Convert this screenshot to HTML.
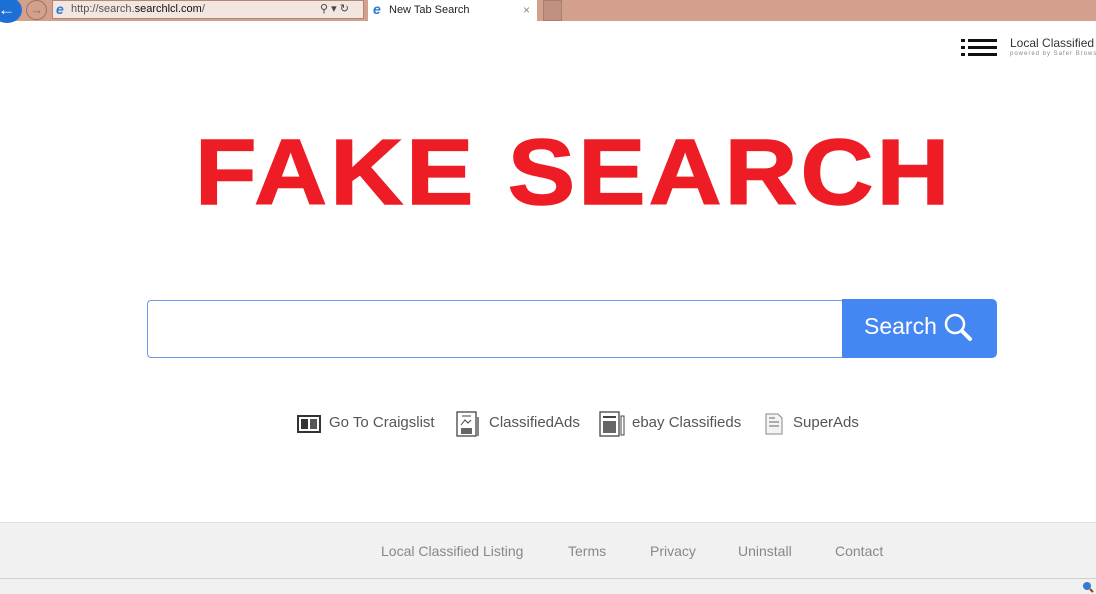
<!DOCTYPE html>
<html><head><style>
*{margin:0;padding:0;box-sizing:border-box}
body{width:1096px;height:594px;overflow:hidden;background:#fff;font-family:"Liberation Sans",Arial,sans-serif;position:relative}
.abs{position:absolute}
</style></head><body>
<div class="abs" style="left:0;top:0;width:1096px;height:21px;background:#d3a08d"></div>
<div class="abs" style="left:-8px;top:-3px;width:30px;height:26px;border-radius:50%;background:#1c6fd4"></div>
<div class="abs" style="left:-2px;top:0;color:#fff;font-size:17px;font-weight:bold">&#8592;</div>
<div class="abs" style="left:26px;top:0;width:21px;height:20px;border-radius:50%;border:1px solid #a0705f;color:#9a6a5a;font-size:13px;text-align:center;line-height:18px">&#8594;</div>
<div class="abs" style="left:52px;top:0;width:312px;height:19px;background:#f3e6e1;border:1px solid #b08878"></div>
<div class="abs" style="left:56px;top:1px;color:#2a7ad0;font-size:14px;font-style:italic;font-weight:bold">e</div>
<div class="abs" style="left:71px;top:3px;font-size:11px;color:#555">http://search.<span style="color:#111">searchlcl.com</span>/</div>
<div class="abs" style="left:320px;top:2px;font-size:11px;color:#444">&#9906; &#9662; &#8635;</div>
<div class="abs" style="left:368px;top:0;width:169px;height:21px;background:#fff"></div>
<div class="abs" style="left:373px;top:1px;color:#2a7ad0;font-size:14px;font-style:italic;font-weight:bold">e</div>
<div class="abs" style="left:389px;top:4px;font-size:11px;color:#222">New Tab Search</div>
<div class="abs" style="left:523px;top:3px;font-size:12px;color:#888">&#215;</div>
<div class="abs" style="left:543px;top:0;width:19px;height:21px;background:#c09080;border:1px solid #a87e70"></div>

<svg class="abs" style="left:961px;top:38px" width="38" height="20"><g fill="#111"><rect x="0" y="1" width="4" height="3"/><rect x="7" y="1" width="29" height="3"/><rect x="0" y="8" width="4" height="3"/><rect x="7" y="8" width="29" height="3"/><rect x="0" y="15" width="4" height="3"/><rect x="7" y="15" width="29" height="3"/></g></svg>
<div class="abs" style="left:1010px;top:36px;font-size:12px;color:#333;white-space:nowrap">Local Classified Listing</div>
<div class="abs" style="left:1010px;top:51px;font-size:6px;color:#888;letter-spacing:1px;white-space:nowrap">powered by Safer Browser</div>

<div class="abs" style="left:195px;top:126px;font-size:93px;line-height:93px;font-weight:bold;color:#ee1c24;letter-spacing:3px;white-space:nowrap;transform:scaleX(1.083);transform-origin:0 0;-webkit-text-stroke:1.5px #ee1c24">FAKE SEARCH</div>

<div class="abs" style="left:147px;top:300px;width:696px;height:58px;border:1px solid #6c9ae8;border-right:none;border-radius:4px 0 0 4px"></div>
<div class="abs" style="left:842px;top:299px;width:155px;height:59px;background:#4587f2;border-radius:0 5px 5px 0"></div>
<div class="abs" style="left:864px;top:313px;font-size:23px;color:#fff">Search</div>
<svg class="abs" style="left:943px;top:312px" width="30" height="30"><circle cx="12" cy="12" r="9" fill="none" stroke="#fff" stroke-width="2.5"/><line x1="19" y1="19" x2="27" y2="27" stroke="#fff" stroke-width="4" stroke-linecap="round"/></svg>

<svg class="abs" style="left:297px;top:414px" width="24" height="20"><rect x="1" y="2" width="22" height="16" fill="none" stroke="#333" stroke-width="2"/><rect x="4" y="5" width="7" height="10" fill="#333"/><rect x="13" y="5" width="7" height="10" fill="#555"/></svg>
<div class="abs" style="left:329px;top:414px;font-size:15px;color:#555">Go To Craigslist</div>
<svg class="abs" style="left:456px;top:411px" width="26" height="26"><rect x="1" y="1" width="19" height="24" fill="none" stroke="#444" stroke-width="1.3"/><line x1="22" y1="6" x2="22" y2="25" stroke="#444" stroke-width="1.3"/><path d="M5 14 L9 9 L12 12 L15 9" fill="none" stroke="#444"/><rect x="5" y="17" width="11" height="6" fill="#666"/><line x1="6" y1="5" x2="15" y2="5" stroke="#444"/></svg>
<div class="abs" style="left:489px;top:414px;font-size:15px;color:#555">ClassifiedAds</div>
<svg class="abs" style="left:599px;top:411px" width="28" height="26"><rect x="1" y="1" width="19" height="24" fill="none" stroke="#444" stroke-width="1.3"/><rect x="22" y="5" width="3" height="19" fill="none" stroke="#444"/><line x1="4" y1="6" x2="17" y2="6" stroke="#444" stroke-width="2"/><rect x="4" y="10" width="13" height="12" fill="#666"/></svg>
<div class="abs" style="left:632px;top:414px;font-size:15px;color:#555">ebay Classifieds</div>
<svg class="abs" style="left:764px;top:413px" width="20" height="22"><path d="M2 1 H14 L18 5 V21 H2 Z" fill="#f4f4f4" stroke="#888"/><line x1="5" y1="9" x2="15" y2="9" stroke="#666"/><line x1="5" y1="13" x2="15" y2="13" stroke="#666"/><line x1="5" y1="5" x2="11" y2="5" stroke="#666"/></svg>
<div class="abs" style="left:793px;top:414px;font-size:15px;color:#555">SuperAds</div>

<div class="abs" style="left:0;top:522px;width:1096px;height:56px;background:#f1f1f1;border-top:1px solid #e0e0e0"></div>
<div class="abs" style="top:543px;left:381px;font-size:14px;color:#888;white-space:nowrap">Local Classified Listing</div>
<div class="abs" style="top:543px;left:568px;font-size:14px;color:#888">Terms</div>
<div class="abs" style="top:543px;left:650px;font-size:14px;color:#888">Privacy</div>
<div class="abs" style="top:543px;left:738px;font-size:14px;color:#888">Uninstall</div>
<div class="abs" style="top:543px;left:835px;font-size:14px;color:#888">Contact</div>
<div class="abs" style="left:0;top:578px;width:1096px;height:16px;background:#f0f0f0;border-top:1px solid #cfcfcf"></div>
<svg class="abs" style="left:1082px;top:581px" width="12" height="12"><circle cx="5" cy="5" r="4" fill="#3a78d0"/><line x1="8" y1="8" x2="11" y2="11" stroke="#7a4a1a" stroke-width="2"/></svg>
</body></html>
